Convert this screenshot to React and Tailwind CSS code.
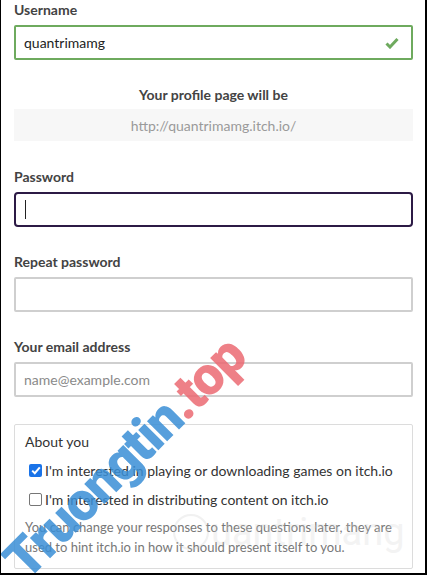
import React from "react";

function Label({ children, className = "" }) {
  return (
    <div className={"text-[14px] leading-[20px] font-bold text-[#434343] " + className}>{children}</div>
  );
}

export default function App() {
  return (
    <div
      className="relative w-[427px] h-[575px] overflow-hidden bg-white border-l border-r-2 border-b-2 border-black text-[#333]"
      style={{ fontFamily: "Lato, 'Noto Sans', sans-serif" }}
    >
      <div className="flex flex-col pl-[13px] pr-[12px]">
        <Label>Username</Label>
        <div className="mt-[5px] h-[35px] border-2 border-[#6eaa5e] rounded-[2px] flex items-center justify-between pl-[8px] pr-[12px]">
          <span className="text-[14px] text-[#222]">quantrimamg</span>
          <svg width="14" height="12" viewBox="0 0 14 12">
            <path d="M1.5 6.5 L5 10 L12.5 2" fill="none" stroke="#6eaa5e" strokeWidth="3" />
          </svg>
        </div>

        <Label className="mt-[25px] text-center">Your profile page will be</Label>
        <div className="mt-[4px] h-[32px] bg-[#f7f7f7] flex items-center justify-center text-[14px] text-[#9a9a9a]">
          http://quantrimamg.itch.io/
        </div>

        <Label className="mt-[26px]">Password</Label>
        <div className="mt-[5px] h-[35px] border-2 border-[#2c1a45] rounded-[4px] flex items-center pl-[9px]">
          <div className="w-px h-[19px] bg-[#222]" />
        </div>

        <Label className="mt-[25px]">Repeat password</Label>
        <div className="mt-[5px] h-[35px] border-2 border-[#cfcfcf] rounded-[2px]" />

        <Label className="mt-[25px]">Your email address</Label>
        <div className="mt-[5px] h-[35px] border-2 border-[#cfcfcf] rounded-[2px] flex items-center pl-[8px] text-[14px] text-[#8a8a8a]">
          name@example.com
        </div>

        <div className="mt-[27px] h-[145px] border border-[#dcdcdc] rounded-[2px] pl-[10px] pt-[7px] flex flex-col">
          <div className="text-[14px] leading-[20px] text-[#333]">About you</div>
          <div className="mt-[8px] flex items-center h-[20px] text-[14px] text-[#333] whitespace-nowrap">
            <div className="ml-[4px] mr-[3px] w-[13px] h-[13px] rounded-[2px] bg-[#1a73e8] flex items-center justify-center">
              <svg width="10" height="9" viewBox="0 0 10 9">
                <path d="M1.2 4.6 L3.8 7.2 L8.8 1.4" fill="none" stroke="white" strokeWidth="2" />
              </svg>
            </div>
            I'm interested in playing or downloading games on itch.io
          </div>
          <div className="mt-[9px] flex items-center h-[20px] text-[14px] text-[#333] whitespace-nowrap">
            <div className="ml-[4px] mr-[3px] w-[13px] h-[13px] rounded-[2px] border border-[#767676] bg-white" />
            I'm interested in distributing content on itch.io
          </div>
          <div className="mt-[8px] text-[13px] leading-[20px] text-[#777] whitespace-nowrap">
            <div>You can change your responses to these questions later, they are</div>
            <div>used to hint itch.io in how it should present itself to you.</div>
          </div>
        </div>
      </div>

      {/* faint quantrimang watermark */}
      <div className="absolute left-[172px] top-[512px] flex items-center gap-[2px] pointer-events-none opacity-25">
        <div className="w-[36px] h-[36px] rounded-full border-2 border-[#c8c8c8]" />
        <span className="text-[38px] leading-[40px] text-[#d0d0d0]" style={{ fontFamily: "Roboto, sans-serif" }}>uantrimang</span>
      </div>

      {/* Truongtin watermark */}
      <div
        className="absolute left-[124px] top-[458px] pointer-events-none whitespace-nowrap text-[54px] leading-[54px] font-black opacity-85"
        style={{ transform: "translate(-50%, -50%) rotate(-45deg)", fontFamily: "Roboto, 'Liberation Sans', sans-serif", letterSpacing: "-1.5px" }}
      >
        <span className="text-[#3a8fd6]">Truongtin</span>
        <span className="text-[#ec6a73]">.top</span>
      </div>
    </div>
  );
}
